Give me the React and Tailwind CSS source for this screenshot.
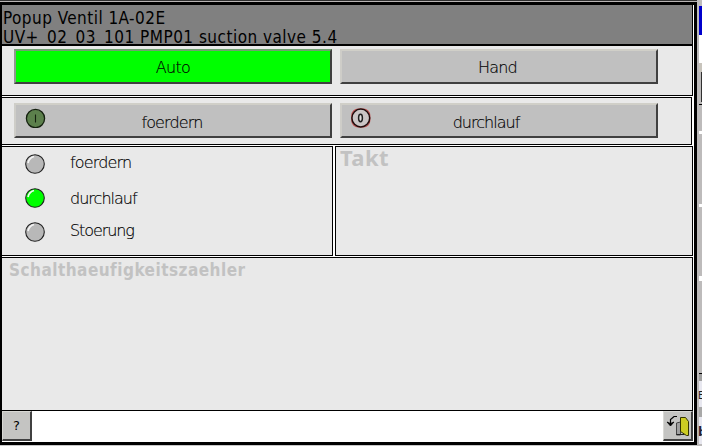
import React from "react";

const thin = "font-['DejaVu_Sans',sans-serif] font-extralight text-[16px] leading-[20px] whitespace-nowrap text-black [-webkit-text-stroke:0.15px_black]";

function Button({ label, green, icon, pad, spacing }) {
  return (
    <button
      className={`relative flex h-[35px] w-[318px] shrink-0 items-center justify-center border-t-2 border-r-2 border-b-2 border-l-2 border-r-[#404040] border-b-[#404040] ${
        green ? "border-t-[#70a070] border-l-[#909890] bg-[#00ff00]" : "border-t-[#d0cfc8] border-l-[#cecdc8] bg-[#c0c0c0]"
      } ${pad}`}
    >
      {icon && <span className="absolute top-[3px] left-[8px]">{icon}</span>}
      <span className={`${thin} ${spacing}`}>{label}</span>
    </button>
  );
}

function OnIcon() {
  return (
    <svg width="22" height="20" viewBox="0 0 22 20" className="block">
      <circle cx="11.5" cy="10.5" r="9.1" fill="#5c804c" stroke="#14200f" strokeWidth="1.3" />
      <path d="M11.5 6.5v8" stroke="#14200f" strokeWidth="1.1" />
    </svg>
  );
}

function OffIcon() {
  return (
    <svg width="22" height="20" viewBox="0 0 22 20" className="block">
      <rect x="1.8" y="1" width="18" height="18" rx="6.5" fill="#cac6c6" stroke="#c05050" strokeWidth="1.2" />
      <circle cx="10.8" cy="10" r="8.9" fill="#cac6c6" stroke="#200c0c" strokeWidth="1.5" />
      <ellipse cx="10.5" cy="10" rx="1.9" ry="3.7" fill="#e0dede" stroke="#202020" strokeWidth="1.5" />
    </svg>
  );
}

function Lamp({ color }) {
  return (
    <svg width="20" height="20" viewBox="0 0 20 20" className="block shrink-0">
      <circle cx="10" cy="10" r="9.3" fill={color} stroke="#202020" strokeWidth="1.1" />
      <path d="M3 9Q4 4 9 2.5" fill="none" stroke="#f4f4f4" strokeWidth="1.8" />
    </svg>
  );
}

function LampRow({ color, label, className, spacing, textClass }) {
  return (
    <div className={`flex h-[20px] pl-[23px] ${className}`}>
      <Lamp color={color} />
      <span className={`ml-[25px] ${thin} ${spacing} ${textClass}`}>{label}</span>
    </div>
  );
}

export default function App() {
  return (
    <div className="flex h-[446px] w-[702px] overflow-hidden bg-[#c0bebe]">
      <div className="flex h-[446px] w-[697px] shrink-0 flex-col">
        <div className="h-px bg-[#303030]" />
        <div className="h-px bg-[#b8b4b4]" />
        <div className="flex h-[443px] flex-col border-t-[3px] border-r-[3px] border-b-[3px] border-l-2 border-black bg-white">
          <header className="h-[41px] w-[691px] shrink-0 overflow-hidden border-r border-b-2 border-black bg-[#808080] pl-px font-['DejaVu_Sans_Condensed','DejaVu_Sans',sans-serif] text-[17px] leading-[19px] whitespace-nowrap text-black [font-stretch:condensed]">
            <div className="mt-[4px] tracking-[0.45px]">Popup Ventil 1A-02E</div>
            <div className="tracking-[0.48px]">UV+_02_03_101 PMP01 suction valve 5.4</div>
          </header>
          <section className="flex h-[50px] w-[691px] shrink-0 gap-[8px] border-r border-b border-black bg-[#e9e9e9] pt-[3px] pl-[12px]">
            <Button label="Auto" green pad="pt-[2px]" spacing="tracking-[-0.7px]" />
            <Button label="Hand" pad="pt-[2px] pr-[3px]" spacing="tracking-[-0.8px]" />
          </section>
          <section className="mt-px flex h-[48px] w-[690px] shrink-0 gap-[8px] border-t border-r border-b border-black bg-[#e9e9e9] pt-[5px] pl-[12px]">
            <Button label="foerdern" pad="pt-[4px] pr-[2px]" icon={<OnIcon />} spacing="tracking-[-0.85px]" />
            <Button label="durchlauf" pad="pt-[4px] pr-[26px]" icon={<OffIcon />} spacing="tracking-[-0.98px]" />
          </section>
          <div className="mt-px flex h-[110px] w-[691px] shrink-0 gap-[2px]">
            <section className="w-[331px] shrink-0 border-t border-r border-b border-black bg-[#e9e9e9]">
              <LampRow color="#b8b8b8" label="foerdern" className="mt-[7px]" spacing="tracking-[-0.85px]" textClass="mt-[-1px]" />
              <LampRow color="#00ff00" label="durchlauf" className="mt-[14px]" spacing="tracking-[-0.98px]" textClass="mt-[1px]" />
              <LampRow color="#b8b8b8" label="Stoerung" className="mt-[14px]" spacing="tracking-[-1.1px]" textClass="mt-[-1px]" />
            </section>
            <section className="flex-1 border border-black bg-[#e9e9e9] pl-[4px] font-['Noto_Sans','DejaVu_Sans',sans-serif] text-[22px] leading-[20px] font-bold tracking-[0.4px] text-[#c2c2c2]">
              Takt
            </section>
          </div>
          <section className="mt-px h-[154px] w-[691px] shrink-0 border-t border-r border-b border-black bg-[#e9e9e9] pl-[7px] font-['DejaVu_Sans_Condensed','DejaVu_Sans',sans-serif] text-[17px] leading-[24px] font-bold tracking-[0.48px] text-[#c2c2c2] [font-stretch:condensed]">
            Schalthaeufigkeitszaehler
          </section>
          <footer className="flex h-[31px] w-[691px] shrink-0 justify-between bg-white">
            <button className="flex h-[30px] w-[30px] items-center justify-center border-t border-r-2 border-b-2 border-l border-t-[#d8d8d4] border-r-[#404040] border-b-[#404040] border-l-[#d8d8d4] bg-[#c4c4c2] font-['DejaVu_Sans',sans-serif] text-[13px] text-black">
              ?
            </button>
            <button className="h-[30px] w-[30px] border-t border-r-2 border-b-2 border-l border-t-[#d8d8d4] border-r-[#404040] border-b-[#404040] border-l-[#d8d8d4] bg-[#c4c4c2]">
              <svg width="27" height="27" viewBox="0 0 27 27" className="block">
                <path d="M12.5 11l4-1v13h-4z" fill="#a0a0a0" stroke="#444" />
                <path d="M12.5 22.5h8" stroke="#222" />
                <path d="M16.5 5.5h5l3 4v14h-2l-6-4z" fill="#cccc22" stroke="#333300" />
                <path d="M13 4.5h-3L6.5 7.5v5" fill="none" stroke="#000" strokeWidth="1.2" />
                <path d="M3 10l3.5 4 3.5-4-3.5 1.5z" fill="#000" stroke="#000" strokeWidth="0.8" />
              </svg>
            </button>
          </footer>
        </div>
        <div className="h-px bg-[#c8c8c8]" />
      </div>
      <div className="flex w-[5px] shrink-0 flex-col bg-[#bdbbbb] pl-[2px] font-['DejaVu_Sans',sans-serif]">
        <div className="mt-[6px] h-[29px] shrink-0 bg-[#0000cc]" />
        <div className="h-[28px] shrink-0 bg-white" />
        <div className="h-[9px] shrink-0 bg-[#c8c4bc]" />
        <div className="ml-[2px] h-[30px] shrink-0 bg-[#303030]" />
        <div className="mt-[2px] h-px shrink-0 bg-black" />
        <div className="mt-[26px] h-[3px] shrink-0 bg-white" />
        <div className="mt-[70px] h-[3px] shrink-0 bg-white" />
        <div className="mt-[69px] h-[5px] shrink-0 bg-white" />
        <div className="mt-[92px] h-px shrink-0 bg-black" />
        <div className="h-[7px] shrink-0 bg-[#a0a0a0]" />
        <div className="h-[26px] shrink-0 bg-[#e8e8f0] pt-[9px] text-[10px] leading-[12px] text-[#222]">
          <span className="-ml-px">E</span>
        </div>
        <div className="h-[10px] shrink-0 bg-[#a8a8a8]" />
        <div className="h-[27px] shrink-0 bg-[#e8e8f0] pt-[8px] text-[12px] leading-[14px] font-bold text-[#223]">
          <span className="-ml-px">b</span>
        </div>
      </div>
    </div>
  );
}
